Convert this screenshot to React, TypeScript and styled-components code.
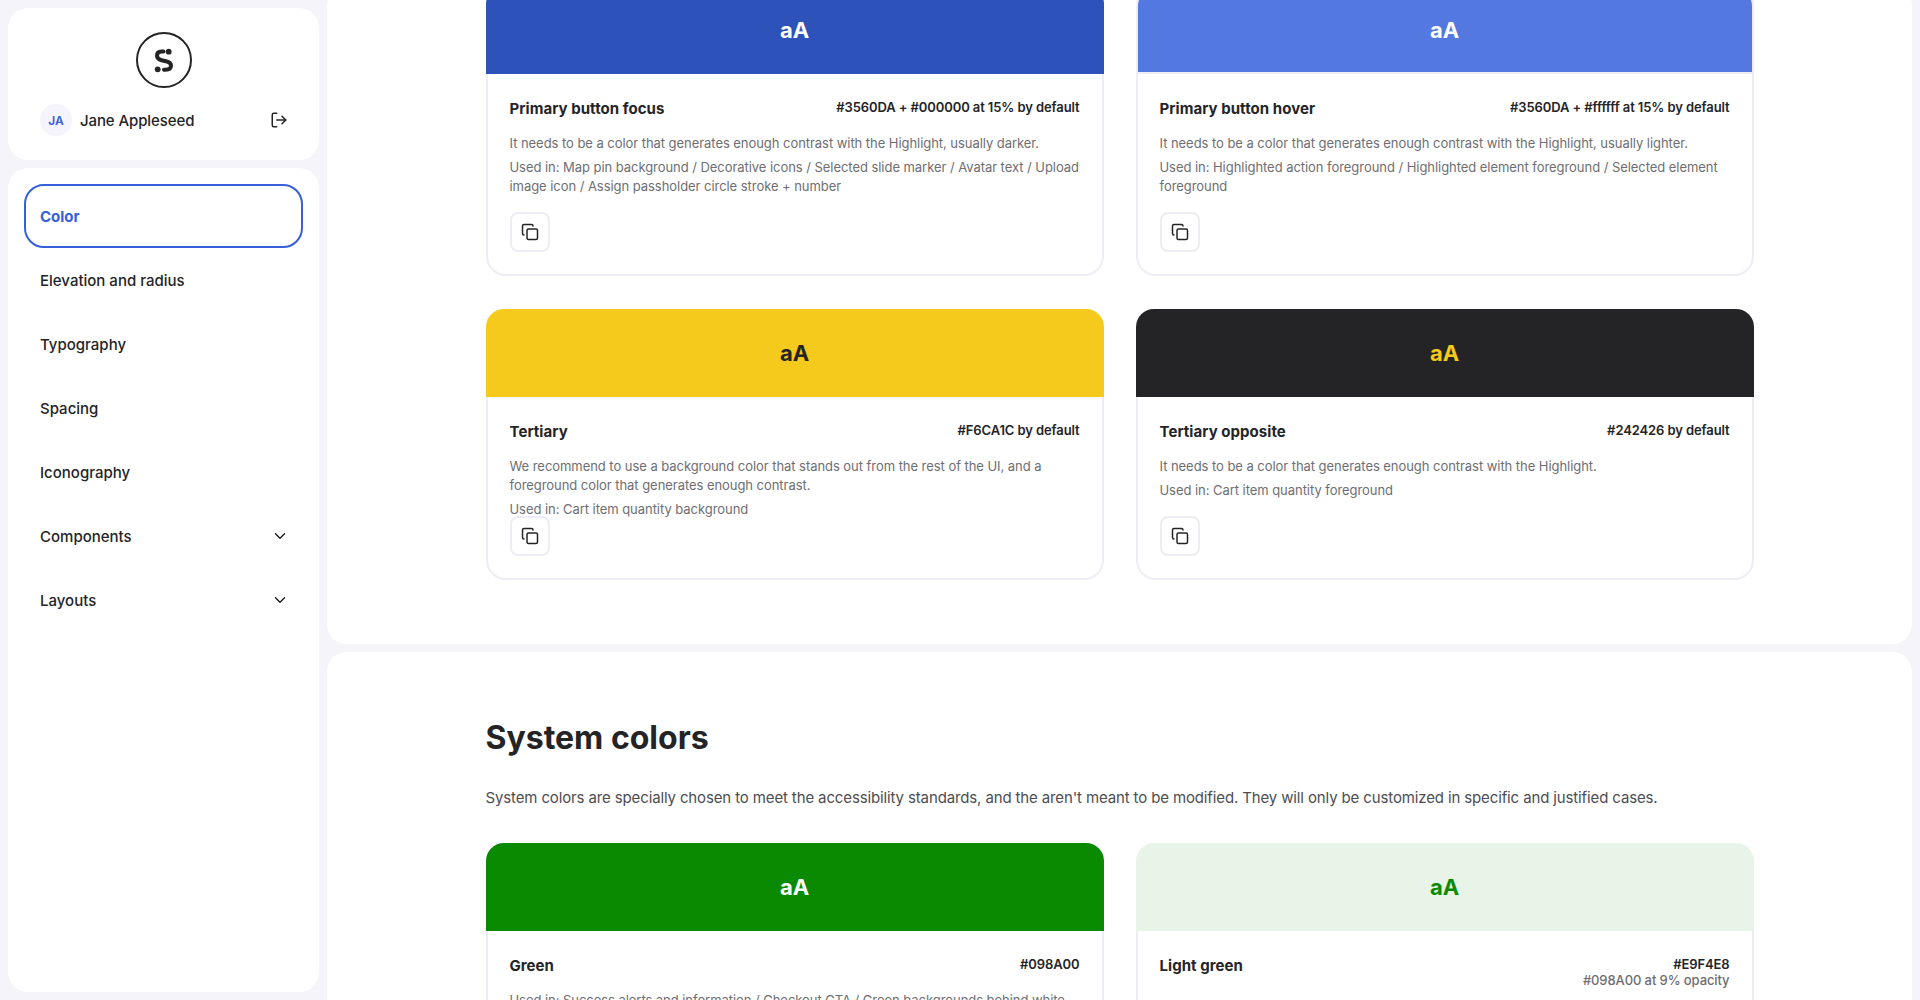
import React from "react";
import styled, { createGlobalStyle } from "styled-components";
import { ChevronDown, Copy, LogOut } from "lucide-react";

const GlobalStyle = createGlobalStyle`
  * {
    box-sizing: border-box;
  }

  html,
  body {
    margin: 0;
    height: 100%;
    overflow: hidden;
    background: #f4f4fa;
    color: #242426;
    font-family: Inter, "Noto Sans", sans-serif;
  }
`;

const Page = styled.div`
  display: grid;
  grid-template-columns: 327px 1fr;
  height: 100vh;
  overflow: hidden;
`;

const Sidebar = styled.aside`
  display: flex;
  flex-direction: column;
  gap: 8px;
  padding: 8px;
  height: 100vh;
`;

const UserCard = styled.div`
  display: flex;
  flex-direction: column;
  align-items: center;
  gap: 16px;
  padding: 24px 32px;
  background: #fff;
  border-radius: 20px;
`;

const UserRow = styled.div`
  display: flex;
  align-items: center;
  gap: 8px;
  width: 100%;
  svg {
    margin-left: auto;
    margin-right: -1px;
  }
`;

const Avatar = styled.div`
  display: flex;
  align-items: center;
  justify-content: center;
  width: 32px;
  height: 32px;
  border-radius: 50%;
  background: #f4f4fa;
  color: #3560da;
  font-size: 12px;
  font-weight: 600;
`;

const UserName = styled.span`
  font-size: 15px;
  font-weight: 500;
  letter-spacing: -0.1px;
`;

const NavCard = styled.nav`
  flex: 1;
  display: flex;
  flex-direction: column;
  padding: 16px;
  background: #fff;
  border-radius: 20px;
`;

const NavItem = styled.div<{ $active?: boolean }>`
  display: flex;
  align-items: center;
  justify-content: space-between;
  height: 64px;
  padding: 0 12px 0 14px;
  border: 2px solid ${(props) => (props.$active ? "#3560da" : "transparent")};
  border-radius: 20px;
  color: ${(props) => (props.$active ? "#3560da" : "#242426")};
  font-size: 15px;
  font-weight: ${(props) => (props.$active ? 700 : 500)};
`;

const Main = styled.main`
  display: flex;
  flex-direction: column;
  gap: 8px;
  height: 100vh;
  padding-right: 8px;
  overflow: hidden;
`;

const Section = styled.section<{ $scrolled?: boolean }>`
  flex-shrink: 0;
  padding: ${(props) => (props.$scrolled ? "0" : "66px")} 10% 64px;
  margin-top: ${(props) => (props.$scrolled ? "-14px" : "0")};
  background: #fff;
  border-radius: 20px;
`;

const Heading = styled.h2`
  margin: 0 0 28px;
  font-size: 32px;
  line-height: 40px;
  font-weight: 700;
`;

const Intro = styled.p`
  margin: 0 0 33px;
  font-size: 15px;
  line-height: 24px;
  color: #4d4d52;
  letter-spacing: -0.13px;
`;

const Grid = styled.div`
  display: grid;
  grid-template-columns: 1fr 1fr;
  gap: 33px 32px;
`;

const Card = styled.article`
  display: flex;
  flex-direction: column;
  border: 2px solid #ededf5;
  border-radius: 20px;
  background: #fff;
`;

const Swatch = styled.div<{ $bg: string; $fg: string; $inset?: boolean }>`
  display: flex;
  align-items: center;
  justify-content: center;
  height: ${(props) => (props.$inset ? "84px" : "88px")};
  margin: ${(props) => (props.$inset ? "0 0 2px" : "-2px -2px 0")};
  background: ${(props) => props.$bg};
  color: ${(props) => props.$fg};
  border-radius: 18px 18px 0 0;
  font-size: 22px;
  font-weight: 700;
  box-shadow: ${(props) => (props.$inset ? "0 2px 0 #ededf5" : "none")};
`;

const Body = styled.div`
  display: flex;
  flex-direction: column;
  padding: 25px 22px 22px;
`;

const TitleRow = styled.div`
  display: flex;
  align-items: flex-start;
  justify-content: space-between;
  margin-bottom: 15px;
`;

const Title = styled.h3`
  margin: 0;
  font-size: 15px;
  line-height: 20px;
  font-weight: 700;
  letter-spacing: 0.05px;
`;

const Codes = styled.div`
  display: flex;
  flex-direction: column;
  align-items: flex-end;
`;

const Code = styled.span<{ $muted?: boolean }>`
  font-size: 13px;
  line-height: 16px;
  font-weight: ${(props) => (props.$muted ? 500 : 600)};
  color: ${(props) => (props.$muted ? "#6e6e73" : "#242426")};
  letter-spacing: -0.1px;
`;

const Texts = styled.div<{ $height: number }>`
  display: flex;
  flex-direction: column;
  gap: 5px;
  height: ${(props) => props.$height}px;
`;

const Text = styled.p`
  margin: 0;
  font-size: 13px;
  line-height: 19px;
  color: #6e6e73;
  letter-spacing: -0.05px;
`;

const CopyButton = styled.button`
  display: flex;
  align-items: center;
  justify-content: center;
  width: 40px;
  height: 40px;
  padding: 0;
  border: 2px solid #ededf5;
  border-radius: 8px;
  background: #fff;
  color: #242426;
`;

const Logo = () => (
  <svg width="56" height="56" viewBox="0 0 56 56" fill="none">
    <circle cx="28" cy="28" r="27" stroke="#242426" strokeWidth="2" />
    <path
      d="M27.5 19.5H25.5C22.5 19.5 21 21.3 21 23.8C21 26.5 23 27.6 25.5 28.2L30 29.2C33 29.9 35 31 35 33.6C35 36.2 33 37.8 29.5 37.8H28"
      stroke="#242426"
      strokeWidth="4"
      strokeLinecap="round"
    />
    <circle cx="32.7" cy="19.7" r="2.9" fill="#242426" />
    <circle cx="21.7" cy="37.3" r="2.9" fill="#242426" />
  </svg>
);

type ColorCard = {
  title: string;
  code: string;
  muted?: string;
  bg: string;
  fg: string;
  inset?: boolean;
  text: string[];
};

const firstRow: ColorCard[] = [
  {
    title: "Primary button focus",
    code: "#3560DA + #000000 at 15% by default",
    bg: "#2d52b9",
    fg: "#fff",
    text: [
      "It needs to be a color that generates enough contrast with the Highlight, usually darker.",
      "Used in: Map pin background / Decorative icons / Selected slide marker / Avatar text / Upload image icon / Assign passholder circle stroke + number",
    ],
  },
  {
    title: "Primary button hover",
    code: "#3560DA + #ffffff at 15% by default",
    bg: "#5378e0",
    fg: "#fff",
    inset: true,
    text: [
      "It needs to be a color that generates enough contrast with the Highlight, usually lighter.",
      "Used in: Highlighted action foreground / Highlighted element foreground / Selected element foreground",
    ],
  },
];

const secondRow: ColorCard[] = [
  {
    title: "Tertiary",
    code: "#F6CA1C by default",
    bg: "#f6ca1c",
    fg: "#242426",
    text: [
      "We recommend to use a background color that stands out from the rest of the UI, and a foreground color that generates enough contrast.",
      "Used in: Cart item quantity background",
    ],
  },
  {
    title: "Tertiary opposite",
    code: "#242426 by default",
    bg: "#242426",
    fg: "#f6ca1c",
    text: [
      "It needs to be a color that generates enough contrast with the Highlight.",
      "Used in: Cart item quantity foreground",
    ],
  },
];

const systemRow: ColorCard[] = [
  {
    title: "Green",
    code: "#098A00",
    bg: "#098a00",
    fg: "#fff",
    text: [
      "Used in: Success alerts and information / Checkout CTA / Green backgrounds behind white",
    ],
  },
  {
    title: "Light green",
    code: "#E9F4E8",
    muted: "#098A00 at 9% opacity",
    bg: "#e9f4e8",
    fg: "#098a00",
    text: [],
  },
];

const Color = ({ card, textHeight }: { card: ColorCard; textHeight: number }) => (
  <Card>
    <Swatch $bg={card.bg} $fg={card.fg} $inset={card.inset}>
      aA
    </Swatch>
    <Body>
      <TitleRow>
        <Title>{card.title}</Title>
        <Codes>
          <Code>{card.code}</Code>
          {card.muted && <Code $muted>{card.muted}</Code>}
        </Codes>
      </TitleRow>
      <Texts $height={textHeight}>
        {card.text.map((line) => (
          <Text key={line}>{line}</Text>
        ))}
      </Texts>
      <CopyButton>
        <Copy size={18} strokeWidth={2} />
      </CopyButton>
    </Body>
  </Card>
);

const navItems = [
  "Color",
  "Elevation and radius",
  "Typography",
  "Spacing",
  "Iconography",
  "Components",
  "Layouts",
];

export default () => {
  return (
    <Page>
      <GlobalStyle />
      <Sidebar>
        <UserCard>
          <Logo />
          <UserRow>
            <Avatar>JA</Avatar>
            <UserName>Jane Appleseed</UserName>
            <LogOut size={18} strokeWidth={2} />
          </UserRow>
        </UserCard>
        <NavCard>
          {navItems.map((item, index) => (
            <NavItem key={item} $active={index === 0}>
              {item}
              {index > 4 && <ChevronDown size={18} strokeWidth={2} />}
            </NavItem>
          ))}
        </NavCard>
      </Sidebar>
      <Main>
        <Section $scrolled>
          <Grid>
            {firstRow.map((card) => (
              <Color key={card.title} card={card} textHeight={78} />
            ))}
            {secondRow.map((card) => (
              <Color key={card.title} card={card} textHeight={59} />
            ))}
          </Grid>
        </Section>
        <Section>
          <Heading>System colors</Heading>
          <Intro>
            System colors are specially chosen to meet the accessibility
            standards, and the aren't meant to be modified. They will only be
            customized in specific and justified cases.
          </Intro>
          <Grid>
            {systemRow.map((card) => (
              <Color key={card.title} card={card} textHeight={40} />
            ))}
          </Grid>
        </Section>
      </Main>
    </Page>
  );
};
